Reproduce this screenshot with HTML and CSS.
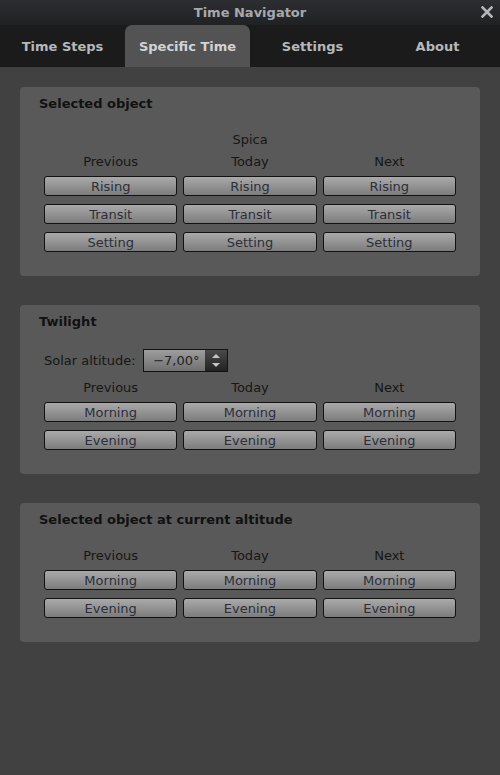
FILE: index.html
```html
<!DOCTYPE html>
<html>
<head>
<meta charset="utf-8">
<link rel="stylesheet" href="styles.css">
</head>
<body>
<div class="window">
  <div class="titlebar">
    <span class="title">Time Navigator</span>
    <svg class="close" width="12" height="12" viewBox="0 0 12 12"><path d="M1.5 1.5 L10.5 10.5 M10.5 1.5 L1.5 10.5" stroke="#b4b6b8" stroke-width="2.6" stroke-linecap="square"/></svg>
  </div>
  <div class="tabs">
    <div class="tab">Time Steps</div>
    <div class="tab active">Specific Time</div>
    <div class="tab">Settings</div>
    <div class="tab">About</div>
  </div>
  <div class="content">
    <section class="panel">
      <div class="ptitle">Selected object</div>
      <div class="pbody">
        <div class="objname">Spica</div>
        <div class="grid">
          <div class="hdr">Previous</div><div class="hdr">Today</div><div class="hdr">Next</div>
          <button class="btn">Rising</button><button class="btn">Rising</button><button class="btn">Rising</button>
          <button class="btn">Transit</button><button class="btn">Transit</button><button class="btn">Transit</button>
          <button class="btn">Setting</button><button class="btn">Setting</button><button class="btn">Setting</button>
        </div>
      </div>
    </section>
    <section class="panel">
      <div class="ptitle">Twilight</div>
      <div class="pbody">
        <div class="altrow">
          <span class="altlabel">Solar altitude:</span>
          <div class="spin">
            <span class="spinval">−7,00°</span>
            <span class="spinarrows">
              <svg width="22" height="21" viewBox="0 0 22 21"><path d="M7 8 L11 4 L15 8 Z" fill="#c4c4c4"/><path d="M7 13 L11 17 L15 13 Z" fill="#c4c4c4"/></svg>
            </span>
          </div>
        </div>
        <div class="grid">
          <div class="hdr">Previous</div><div class="hdr">Today</div><div class="hdr">Next</div>
          <button class="btn">Morning</button><button class="btn">Morning</button><button class="btn">Morning</button>
          <button class="btn">Evening</button><button class="btn">Evening</button><button class="btn">Evening</button>
        </div>
      </div>
    </section>
    <section class="panel">
      <div class="ptitle">Selected object at current altitude</div>
      <div class="pbody">
        <div class="grid">
          <div class="hdr">Previous</div><div class="hdr">Today</div><div class="hdr">Next</div>
          <button class="btn">Morning</button><button class="btn">Morning</button><button class="btn">Morning</button>
          <button class="btn">Evening</button><button class="btn">Evening</button><button class="btn">Evening</button>
        </div>
      </div>
    </section>
  </div>
</div>
</body>
</html>
```
FILE: styles.css
```css
html, body {
  margin: 0;
  padding: 0;
  background: #414141;
}
body {
  font-family: "DejaVu Sans", "Liberation Sans", sans-serif;
  font-size: 13px;
  width: 500px;
  height: 775px;
  overflow: hidden;
}
.window {
  display: flex;
  flex-direction: column;
  height: 775px;
}
.titlebar {
  height: 25px;
  background: linear-gradient(to bottom, #2c2e31, #1f2123);
  display: flex;
  align-items: center;
  justify-content: center;
  position: relative;
}
.title {
  color: #a6a9ac;
  font-weight: bold;
  font-size: 13px;
  line-height: 16px;
}
.close {
  position: absolute;
  right: 7px;
  top: 6px;
}
.tabs {
  height: 42px;
  background: #1b1b1b;
  display: grid;
  grid-template-columns: repeat(4, 125px);
  align-items: stretch;
}
.tab {
  display: flex;
  align-items: center;
  justify-content: center;
  color: #b6b8ba;
  font-weight: bold;
  font-size: 13px;
  padding-top: 1px;
}
.tab.active {
  background: #535353;
  border-radius: 7px 7px 0 0;
  color: #d2d3d4;
}
.content {
  flex: 1;
  padding: 20px 20px 0 20px;
  display: flex;
  flex-direction: column;
  gap: 29px;
}
.panel {
  background: #595959;
  border-radius: 4px;
  padding: 9px 24px 24px 24px;
}
.ptitle {
  font-weight: bold;
  color: #111;
  line-height: 16px;
  margin-left: -5px;
}
.pbody {
  margin-top: 19px;
}
.objname {
  text-align: center;
  line-height: 16px;
  padding-top: 1px;
  color: #161616;
  margin-bottom: 5px;
}
.grid {
  display: grid;
  grid-template-columns: repeat(3, 1fr);
  column-gap: 6px;
  row-gap: 8px;
}
.hdr {
  text-align: center;
  line-height: 16px;
  padding-top: 1px;
  color: #161616;
  margin-bottom: -2px;
}
.btn {
  height: 20px;
  margin: 0;
  padding: 1px 0 0 0;
  border: 1px solid #121212;
  border-radius: 3px;
  background: linear-gradient(to bottom, #aaaaaa, #7c7c7c);
  font-family: "DejaVu Sans", "Liberation Sans", sans-serif;
  font-size: 13px;
  color: #2c2e3a;
  line-height: 17px;
}
.altrow {
  display: flex;
  align-items: center;
  gap: 7px;
  margin-bottom: 7px;
}
.altlabel {
  color: #161616;
  line-height: 16px;
  padding-top: 1px;
}
.spin {
  width: 85px;
  height: 23px;
  box-sizing: border-box;
  border: 1px solid #121212;
  display: flex;
  background: linear-gradient(to bottom, #9d9d9d, #707070);
}
.spinval {
  flex: 1;
  text-align: right;
  padding-right: 5px;
  padding-top: 1px;
  line-height: 20px;
  color: #222;
}
.spinarrows {
  width: 22px;
  background: linear-gradient(to bottom, #4a4a4a, #222);
  display: flex;
}
```
